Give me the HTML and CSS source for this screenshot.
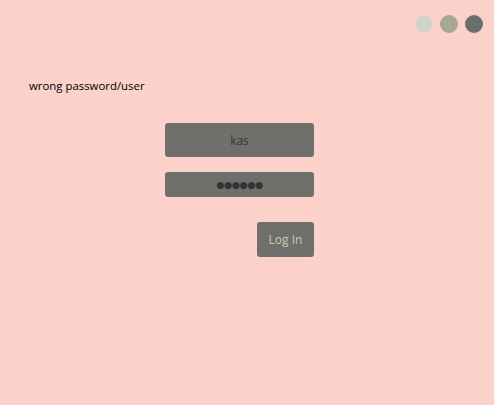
FILE: index.html
```html
<!DOCTYPE html>
<html>
<head>
<meta charset="utf-8">
<link rel="stylesheet" href="styles.css">
</head>
<body>
<div class="app">
  <div class="topbar">
    <span class="dot dot-light"></span>
    <span class="dot dot-mid"></span>
    <span class="dot dot-dark"></span>
  </div>
  <div class="error">wrong password/user</div>
  <form class="login">
    <div class="field user">kas</div>
    <div class="field pass">●●●●●●</div>
    <div class="actions"><button type="button" class="btn">Log In</button></div>
  </form>
</div>
</body>
</html>
```
FILE: styles.css
```css
html, body {
  margin: 0;
  padding: 0;
  background: #fcd1c9;
  width: 494px;
  height: 405px;
  overflow: hidden;
}
.app {
  font-family: "Open Sans", "Noto Sans", sans-serif;
  display: flex;
  flex-direction: column;
}
.topbar {
  display: flex;
  justify-content: flex-end;
  gap: 7px;
  padding: 15px 11px 0 0;
}
.dot {
  width: 18px;
  height: 18px;
  border-radius: 50%;
}
.dot-light { background: #d1d2ca; }
.dot-mid { background: #a6a894; }
.dot-dark { background: #6c6e6a; }
.error {
  margin: 45px 0 0 29px;
  font-size: 11.4px;
  color: #000;
  line-height: 16px;
}
.login {
  margin: 29px 0 0 165px;
  width: 149px;
  display: flex;
  flex-direction: column;
}
.field {
  background: #6f6f6b;
  border-radius: 3px;
  display: flex;
  align-items: center;
  justify-content: center;
}
.user {
  height: 34px;
  font-size: 12px;
  color: #3f3439;
}
.pass {
  height: 25px;
  margin-top: 15px;
  font-size: 9.5px;
  letter-spacing: -0.5px;
  color: #333436;
  font-family: "DejaVu Sans", sans-serif;
}
.actions {
  display: flex;
  justify-content: flex-end;
  margin-top: 25px;
}
.btn {
  width: 57px;
  height: 35px;
  background: #6f706b;
  border: none;
  border-radius: 3px;
  color: #c8cbb2;
  font-family: "Open Sans", "Noto Sans", sans-serif;
  font-size: 12px;
  padding: 0;
}
```
